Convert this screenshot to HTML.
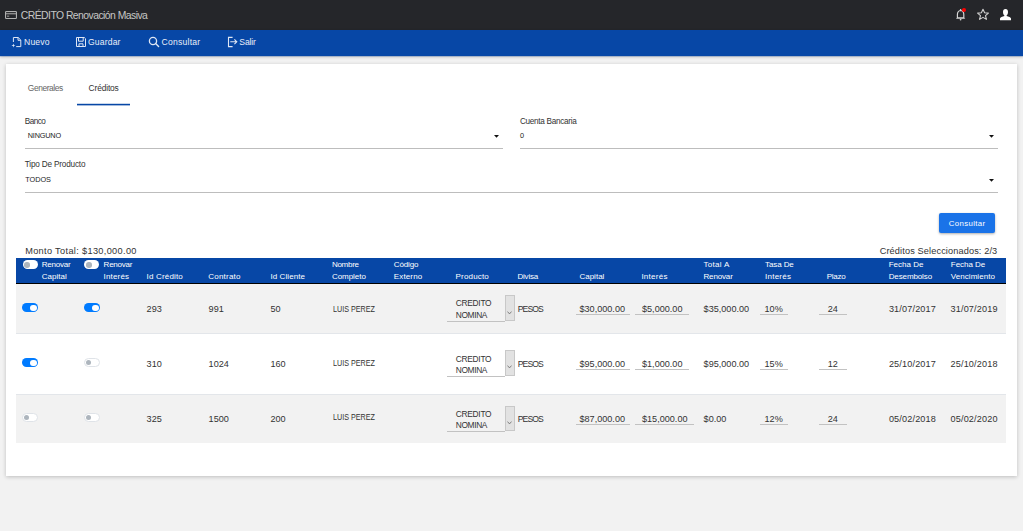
<!DOCTYPE html>
<html><head><meta charset="utf-8"><title>Crédito Renovación Masiva</title>
<style>
html,body{margin:0;padding:0;}
body{width:1023px;height:531px;overflow:hidden;background:#f2f2f2;position:relative;font-family:"Liberation Sans",sans-serif;}
.t{position:absolute;white-space:nowrap;line-height:12px;}
.r{position:absolute;}
</style></head><body>
<div class="r" style="left:0px;top:0px;width:1023px;height:30px;background:#25262a;"></div>
<svg class="r" style="left:5px;top:11px" width="12" height="8" viewBox="0 0 12 8"><rect x="0.55" y="0.55" width="10.9" height="6.9" rx="0.8" fill="none" stroke="#b0b0b0" stroke-width="1.1"/><rect x="1" y="1.9" width="10" height="1.5" fill="#8a8a8a"/><rect x="2" y="4.6" width="2.2" height="1.2" fill="#8a8a8a"/></svg>
<div class="t" style="left:20.80px;top:10.40px;font-size:10.4px;color:#c6c6c6;letter-spacing:-0.544px;">CRÉDITO Renovación Masiva</div>
<svg class="r" style="left:955px;top:8px" width="12" height="13" viewBox="0 0 12 13"><path d="M2.4 10 V6.6 C2.4 4.3 3.6 2.8 5.6 2.5 C7.6 2.8 8.8 4.3 8.8 6.6 V10" fill="none" stroke="#d8d8d8" stroke-width="1.15"/><path d="M2.6 9.3 L0.9 10.7 H10.3 L8.6 9.3 Z" fill="#d8d8d8"/><circle cx="5.6" cy="1.9" r="0.8" fill="#d8d8d8"/><circle cx="5.6" cy="11.6" r="0.85" fill="#cfcfcf"/></svg>
<div class="r" style="left:961.8px;top:7.8px;width:4.6px;height:4.6px;border-radius:50%;background:#f00"></div>
<svg class="r" style="left:976px;top:8px" width="14" height="13" viewBox="0 0 14 13"><path d="M7 1.2 L8.6 4.8 L12.4 5.1 L9.5 7.6 L10.4 11.4 L7 9.4 L3.6 11.4 L4.5 7.6 L1.6 5.1 L5.4 4.8 Z" fill="none" stroke="#cfcfcf" stroke-width="1.1" stroke-linejoin="round"/></svg>
<svg class="r" style="left:999px;top:8px" width="13" height="13" viewBox="0 0 13 13"><path d="M6.5 1 C8.2 1 9 2.3 9 4 C9 5.6 8.3 7 7.6 7.4 L7.6 8 C9.5 8.5 12 9.3 12 10.5 V12.2 H1 V10.5 C1 9.3 3.5 8.5 5.4 8 L5.4 7.4 C4.7 7 4 5.6 4 4 C4 2.3 4.8 1 6.5 1 Z" fill="#ffffff"/></svg>
<div class="r" style="left:0px;top:30px;width:1023px;height:26px;background:#0747a6;box-shadow:0 1px 3px rgba(0,0,0,0.22);z-index:2"></div>
<div class="r" style="left:0px;top:56px;width:1023px;height:1px;background:rgba(7,71,166,0.2);z-index:3"></div>
<svg class="r" style="left:11px;top:36px;z-index:3" width="12" height="12" viewBox="0 0 12 12"><path d="M2.4 6 V1.5 H7.2 L9.8 4.1 V10.6 H5.2" fill="none" stroke="#dfe7f5" stroke-width="1"/><path d="M7 1.5 V4.3 H9.8" fill="none" stroke="#dfe7f5" stroke-width="1"/><path d="M2.4 7.6 L2.9 9.1 L4.4 9.6 L2.9 10.1 L2.4 11.6 L1.9 10.1 L0.4 9.6 L1.9 9.1 Z" fill="#dfe7f5"/></svg>
<div class="t" style="left:24.00px;top:36.02px;font-size:8.6px;color:#e9eef8;letter-spacing:0.184px;z-index:3">Nuevo</div>
<svg class="r" style="left:76px;top:37px;z-index:3" width="10" height="10" viewBox="0 0 10 10"><path d="M0.5 0.5 H8.3 L9.5 1.7 V9.5 H0.5 Z" fill="none" stroke="#dfe7f5" stroke-width="1"/><path d="M2.5 0.5 V4.2 H7.2 V0.5" fill="none" stroke="#dfe7f5" stroke-width="1"/><path d="M3 9.5 V6.8 H7 V9.5" fill="none" stroke="#dfe7f5" stroke-width="1"/></svg>
<div class="t" style="left:88.00px;top:36.02px;font-size:8.6px;color:#e9eef8;letter-spacing:0.159px;z-index:3">Guardar</div>
<svg class="r" style="left:148px;top:36px;z-index:3" width="12" height="12" viewBox="0 0 12 12"><circle cx="5" cy="5" r="3.6" fill="none" stroke="#dfe7f5" stroke-width="1.3"/><path d="M7.6 7.6 L10.6 10.6" stroke="#dfe7f5" stroke-width="1.4" stroke-linecap="round"/></svg>
<div class="t" style="left:161.50px;top:36.02px;font-size:8.6px;color:#e9eef8;letter-spacing:0.237px;z-index:3">Consultar</div>
<svg class="r" style="left:227px;top:36px;z-index:3" width="12" height="12" viewBox="0 0 12 12"><path d="M5.6 1.4 H1.5 V10.6 H5.6" fill="none" stroke="#dfe7f5" stroke-width="1.1"/><path d="M3.3 5.8 H9.6 M7.4 3.4 L9.8 5.8 L7.4 8.2" fill="none" stroke="#dfe7f5" stroke-width="1.1"/></svg>
<div class="t" style="left:239.30px;top:36.02px;font-size:8.6px;color:#e9eef8;letter-spacing:-0.127px;z-index:3">Salir</div>
<div class="r" style="left:6px;top:64px;width:1011px;height:412px;background:#ffffff;box-shadow:0 1px 4px rgba(0,0,0,0.22)"></div>
<div class="t" style="left:27.80px;top:82.29px;font-size:8.4px;color:#666;letter-spacing:-0.407px;">Generales</div>
<div class="t" style="left:88.60px;top:82.29px;font-size:8.4px;color:#333;letter-spacing:-0.14px;">Créditos</div>
<div class="r" style="left:77px;top:104px;width:53px;height:1px;background:#0747a6;"></div>
<div class="r" style="left:77px;top:103px;width:53px;height:1px;background:rgba(7,71,166,0.22);"></div>
<div class="r" style="left:77px;top:105px;width:53px;height:1px;background:rgba(7,71,166,0.38);"></div>
<div class="t" style="left:24.80px;top:115.76px;font-size:8.2px;color:#333;letter-spacing:-0.537px;">Banco</div>
<div class="t" style="left:27.70px;top:130.37px;font-size:7.3px;color:#222;letter-spacing:-0.178px;">NINGUNO</div>
<div class="r" style="left:25px;top:148px;width:478px;height:1px;background:#bdbdbd;"></div>
<svg class="r" style="left:493.8px;top:134.5px" width="5" height="3" viewBox="0 0 5 3"><path d="M0 0 H5 L2.5 2.7 Z" fill="#111"/></svg>
<div class="t" style="left:520.00px;top:115.76px;font-size:8.2px;color:#333;letter-spacing:-0.306px;">Cuenta Bancaria</div>
<div class="t" style="left:520.00px;top:130.37px;font-size:7.3px;color:#222;letter-spacing:0px;">0</div>
<div class="r" style="left:520px;top:148px;width:478px;height:1px;background:#bdbdbd;"></div>
<svg class="r" style="left:988.7px;top:134.5px" width="5" height="3" viewBox="0 0 5 3"><path d="M0 0 H5 L2.5 2.7 Z" fill="#111"/></svg>
<div class="t" style="left:24.80px;top:159.26px;font-size:8.2px;color:#333;letter-spacing:-0.181px;">Tipo De Producto</div>
<div class="t" style="left:25.30px;top:174.07px;font-size:7.3px;color:#222;letter-spacing:-0.032px;">TODOS</div>
<div class="r" style="left:25px;top:192px;width:973px;height:1px;background:#bdbdbd;"></div>
<svg class="r" style="left:988.7px;top:178.5px" width="5" height="3" viewBox="0 0 5 3"><path d="M0 0 H5 L2.5 2.7 Z" fill="#111"/></svg>
<div class="r" style="left:939px;top:213px;width:56px;height:20px;background:#1a73e8;border-radius:2px;box-shadow:0 1px 2.5px rgba(0,0,0,0.32)"></div>
<div class="t" style="left:948.80px;top:218.30px;font-size:7.8px;color:#fff;letter-spacing:0.364px;">Consultar</div>
<div class="t" style="left:25.20px;top:244.51px;font-size:9.2px;color:#333;letter-spacing:0.336px;">Monto Total: $130,000.00</div>
<div class="t" style="left:879.70px;top:244.51px;font-size:9.2px;color:#333;letter-spacing:0.121px;">Créditos Seleccionados: 2/3</div>
<div class="r" style="left:16px;top:258px;width:990px;height:25px;background:#0747a6;"></div>
<div class="r" style="left:16px;top:283px;width:990px;height:1px;background:#000;"></div>
<div class="r" style="left:22.5px;top:260.4px;width:15px;height:8.5px;border-radius:5px;background:#fff"></div><div class="r" style="left:24.3px;top:262px;width:5.5px;height:5.5px;border-radius:50%;background:#adb5bd"></div>
<div class="r" style="left:84.2px;top:260.4px;width:15px;height:8.5px;border-radius:5px;background:#fff"></div><div class="r" style="left:86.0px;top:262px;width:5.5px;height:5.5px;border-radius:50%;background:#adb5bd"></div>
<div class="t" style="left:41.70px;top:259.33px;font-size:8px;color:#ffffff;letter-spacing:-0.19px;">Renovar</div>
<div class="t" style="left:41.70px;top:270.63px;font-size:8px;color:#ffffff;letter-spacing:0.016px;">Capital</div>
<div class="t" style="left:103.60px;top:259.33px;font-size:8px;color:#ffffff;letter-spacing:-0.24px;">Renovar</div>
<div class="t" style="left:103.60px;top:270.63px;font-size:8px;color:#ffffff;letter-spacing:0.157px;">Interés</div>
<div class="t" style="left:146.60px;top:270.63px;font-size:8px;color:#ffffff;letter-spacing:0.169px;">Id Crédito</div>
<div class="t" style="left:208.20px;top:270.63px;font-size:8px;color:#ffffff;letter-spacing:0.231px;">Contrato</div>
<div class="t" style="left:270.40px;top:270.63px;font-size:8px;color:#ffffff;letter-spacing:0.089px;">Id Cliente</div>
<div class="t" style="left:331.90px;top:259.33px;font-size:8px;color:#ffffff;letter-spacing:-0.271px;">Nombre</div>
<div class="t" style="left:331.90px;top:270.63px;font-size:8px;color:#ffffff;letter-spacing:-0.034px;">Completo</div>
<div class="t" style="left:393.80px;top:259.33px;font-size:8px;color:#ffffff;letter-spacing:-0.13px;">Código</div>
<div class="t" style="left:393.80px;top:270.63px;font-size:8px;color:#ffffff;letter-spacing:0.139px;">Externo</div>
<div class="t" style="left:455.60px;top:270.63px;font-size:8px;color:#ffffff;letter-spacing:0.169px;">Producto</div>
<div class="t" style="left:517.40px;top:270.63px;font-size:8px;color:#ffffff;letter-spacing:-0.178px;">Divisa</div>
<div class="t" style="left:579.40px;top:270.63px;font-size:8px;color:#ffffff;letter-spacing:0.016px;">Capital</div>
<div class="t" style="left:641.40px;top:270.63px;font-size:8px;color:#ffffff;letter-spacing:0.257px;">Interés</div>
<div class="t" style="left:703.50px;top:259.33px;font-size:8px;color:#ffffff;letter-spacing:0.297px;">Total A</div>
<div class="t" style="left:703.50px;top:270.63px;font-size:8px;color:#ffffff;letter-spacing:-0.157px;">Renovar</div>
<div class="t" style="left:765.10px;top:259.33px;font-size:8px;color:#ffffff;letter-spacing:-0.107px;">Tasa De</div>
<div class="t" style="left:765.10px;top:270.63px;font-size:8px;color:#ffffff;letter-spacing:0.224px;">Interés</div>
<div class="t" style="left:826.70px;top:270.63px;font-size:8px;color:#ffffff;letter-spacing:-0.252px;">Plazo</div>
<div class="t" style="left:888.70px;top:259.33px;font-size:8px;color:#ffffff;letter-spacing:0.003px;">Fecha De</div>
<div class="t" style="left:888.70px;top:270.63px;font-size:8px;color:#ffffff;letter-spacing:-0.118px;">Desembolso</div>
<div class="t" style="left:950.80px;top:259.33px;font-size:8px;color:#ffffff;letter-spacing:-0.04px;">Fecha De</div>
<div class="t" style="left:950.80px;top:270.63px;font-size:8px;color:#ffffff;letter-spacing:0.052px;">Vencimiento</div>
<div class="r" style="left:16px;top:284px;width:990px;height:50px;background:#f2f2f2;"></div>
<div class="r" style="left:16px;top:333px;width:990px;height:1px;background:#e3e6ea;"></div>
<div class="r" style="left:22px;top:303.20000000000005px;width:16px;height:9px;border-radius:5px;background:#007bff"></div><div class="r" style="left:30.3px;top:304.50000000000006px;width:6.4px;height:6.4px;border-radius:50%;background:#fff"></div>
<div class="r" style="left:84px;top:303.20000000000005px;width:16px;height:9px;border-radius:5px;background:#007bff"></div><div class="r" style="left:92.3px;top:304.50000000000006px;width:6.4px;height:6.4px;border-radius:50%;background:#fff"></div>
<div class="t" style="left:146.60px;top:302.95px;font-size:9.1px;color:#333;letter-spacing:0px;">293</div>
<div class="t" style="left:208.60px;top:302.95px;font-size:9.1px;color:#333;letter-spacing:0px;">991</div>
<div class="t" style="left:270.40px;top:302.95px;font-size:9.1px;color:#333;letter-spacing:0px;">50</div>
<div class="t" style="left:333.20px;top:303.22px;font-size:8.3px;color:#333;letter-spacing:0px;transform:scaleX(0.8652);transform-origin:0.00px 0;">LUIS PEREZ</div>
<div class="r" style="left:446.7px;top:321.0px;width:58.60000000000002px;height:1.0px;background:#c2c2c2;"></div>
<div class="r" style="left:505.3px;top:295.3px;width:9.300000000000011px;height:26.19999999999999px;background:#e2e2e2;box-sizing:border-box;border:1px solid #c8c8c8"></div>
<svg class="r" style="left:507.3px;top:310.50px" width="5" height="4" viewBox="0 0 5 4"><path d="M0.5 0.6 L2.5 2.9 L4.5 0.6" fill="none" stroke="#666" stroke-width="0.8"/></svg>
<div class="t" style="left:455.80px;top:297.39px;font-size:8.4px;color:#333;letter-spacing:-0.291px;">CREDITO</div>
<div class="t" style="left:455.80px;top:309.29px;font-size:8.4px;color:#333;letter-spacing:-0.38px;">NOMINA</div>
<div class="t" style="left:517.70px;top:303.42px;font-size:8.6px;color:#333;letter-spacing:-0.884px;">PESOS</div>
<div class="r" style="left:575.5px;top:314.4px;width:54.5px;height:1.0px;background:#c2c2c2;"></div>
<div class="t" style="left:579.50px;top:302.95px;font-size:9.1px;color:#333;letter-spacing:0px;">$30,000.00</div>
<div class="r" style="left:635px;top:314.4px;width:54px;height:1.0px;background:#c2c2c2;"></div>
<div class="t" style="left:642.00px;top:302.95px;font-size:9.1px;color:#333;letter-spacing:0px;">$5,000.00</div>
<div class="t" style="left:703.60px;top:302.95px;font-size:9.1px;color:#333;letter-spacing:0px;">$35,000.00</div>
<div class="r" style="left:759.5px;top:314.4px;width:28.299999999999955px;height:1.0px;background:#c2c2c2;"></div>
<div class="t" style="left:764.55px;top:302.95px;font-size:9.1px;color:#333;letter-spacing:0px;">10%</div>
<div class="r" style="left:818.6px;top:314.4px;width:28.199999999999932px;height:1.0px;background:#c2c2c2;"></div>
<div class="t" style="left:827.64px;top:302.95px;font-size:9.1px;color:#333;letter-spacing:0px;">24</div>
<div class="t" style="left:888.90px;top:302.95px;font-size:9.1px;color:#333;letter-spacing:0.162px;">31/07/2017</div>
<div class="t" style="left:950.50px;top:302.95px;font-size:9.1px;color:#333;letter-spacing:0.162px;">31/07/2019</div>
<div class="r" style="left:16px;top:334px;width:990px;height:60px;background:#ffffff;"></div>
<div class="r" style="left:22px;top:358.20000000000005px;width:16px;height:9px;border-radius:5px;background:#007bff"></div><div class="r" style="left:30.3px;top:359.50000000000006px;width:6.4px;height:6.4px;border-radius:50%;background:#fff"></div>
<div class="r" style="left:84px;top:358.20000000000005px;width:15.5px;height:8.5px;border-radius:5px;background:#fff;box-sizing:border-box;border:1px solid #dfe3e8"></div><div class="r" style="left:85.7px;top:359.70000000000005px;width:5.5px;height:5.5px;border-radius:50%;background:#adb5bd"></div>
<div class="t" style="left:146.60px;top:357.95px;font-size:9.1px;color:#333;letter-spacing:0px;">310</div>
<div class="t" style="left:208.60px;top:357.95px;font-size:9.1px;color:#333;letter-spacing:0px;">1024</div>
<div class="t" style="left:270.40px;top:357.95px;font-size:9.1px;color:#333;letter-spacing:0px;">160</div>
<div class="t" style="left:333.20px;top:357.22px;font-size:8.3px;color:#333;letter-spacing:0px;transform:scaleX(0.8652);transform-origin:0.00px 0;">LUIS PEREZ</div>
<div class="r" style="left:446.7px;top:375.6px;width:58.60000000000002px;height:1.0px;background:#c2c2c2;"></div>
<div class="r" style="left:505.3px;top:349.75px;width:9.300000000000011px;height:26.350000000000023px;background:#e2e2e2;box-sizing:border-box;border:1px solid #c8c8c8"></div>
<svg class="r" style="left:507.3px;top:364.95px" width="5" height="4" viewBox="0 0 5 4"><path d="M0.5 0.6 L2.5 2.9 L4.5 0.6" fill="none" stroke="#666" stroke-width="0.8"/></svg>
<div class="t" style="left:455.80px;top:353.29px;font-size:8.4px;color:#333;letter-spacing:-0.291px;">CREDITO</div>
<div class="t" style="left:455.80px;top:364.39px;font-size:8.4px;color:#333;letter-spacing:-0.38px;">NOMINA</div>
<div class="t" style="left:517.70px;top:358.42px;font-size:8.6px;color:#333;letter-spacing:-0.884px;">PESOS</div>
<div class="r" style="left:575.5px;top:369.3px;width:54.5px;height:1.0px;background:#c2c2c2;"></div>
<div class="t" style="left:579.50px;top:357.95px;font-size:9.1px;color:#333;letter-spacing:0px;">$95,000.00</div>
<div class="r" style="left:635px;top:369.3px;width:54px;height:1.0px;background:#c2c2c2;"></div>
<div class="t" style="left:642.00px;top:357.95px;font-size:9.1px;color:#333;letter-spacing:0px;">$1,000.00</div>
<div class="t" style="left:703.60px;top:357.95px;font-size:9.1px;color:#333;letter-spacing:0px;">$95,000.00</div>
<div class="r" style="left:759.5px;top:369.3px;width:28.299999999999955px;height:1.0px;background:#c2c2c2;"></div>
<div class="t" style="left:764.55px;top:357.95px;font-size:9.1px;color:#333;letter-spacing:0px;">15%</div>
<div class="r" style="left:818.6px;top:369.3px;width:28.199999999999932px;height:1.0px;background:#c2c2c2;"></div>
<div class="t" style="left:827.64px;top:357.95px;font-size:9.1px;color:#333;letter-spacing:0px;">12</div>
<div class="t" style="left:888.90px;top:357.95px;font-size:9.1px;color:#333;letter-spacing:0.162px;">25/10/2017</div>
<div class="t" style="left:950.50px;top:357.95px;font-size:9.1px;color:#333;letter-spacing:0.162px;">25/10/2018</div>
<div class="r" style="left:16px;top:394px;width:990px;height:49px;background:#f2f2f2;"></div>
<div class="r" style="left:16px;top:394px;width:990px;height:1px;background:#e3e6ea;"></div>
<div class="r" style="left:22px;top:413.20000000000005px;width:15.5px;height:8.5px;border-radius:5px;background:#fff;box-sizing:border-box;border:1px solid #dfe3e8"></div><div class="r" style="left:23.7px;top:414.70000000000005px;width:5.5px;height:5.5px;border-radius:50%;background:#adb5bd"></div>
<div class="r" style="left:84px;top:413.20000000000005px;width:15.5px;height:8.5px;border-radius:5px;background:#fff;box-sizing:border-box;border:1px solid #dfe3e8"></div><div class="r" style="left:85.7px;top:414.70000000000005px;width:5.5px;height:5.5px;border-radius:50%;background:#adb5bd"></div>
<div class="t" style="left:146.60px;top:412.95px;font-size:9.1px;color:#333;letter-spacing:0px;">325</div>
<div class="t" style="left:208.60px;top:412.95px;font-size:9.1px;color:#333;letter-spacing:0px;">1500</div>
<div class="t" style="left:270.40px;top:412.95px;font-size:9.1px;color:#333;letter-spacing:0px;">200</div>
<div class="t" style="left:333.20px;top:411.22px;font-size:8.3px;color:#333;letter-spacing:0px;transform:scaleX(0.8652);transform-origin:0.00px 0;">LUIS PEREZ</div>
<div class="r" style="left:446.7px;top:430.8px;width:58.60000000000002px;height:1.0px;background:#c2c2c2;"></div>
<div class="r" style="left:505.3px;top:405.5px;width:9.300000000000011px;height:25.80000000000001px;background:#e2e2e2;box-sizing:border-box;border:1px solid #c8c8c8"></div>
<svg class="r" style="left:507.3px;top:420.70px" width="5" height="4" viewBox="0 0 5 4"><path d="M0.5 0.6 L2.5 2.9 L4.5 0.6" fill="none" stroke="#666" stroke-width="0.8"/></svg>
<div class="t" style="left:455.80px;top:407.69px;font-size:8.4px;color:#333;letter-spacing:-0.291px;">CREDITO</div>
<div class="t" style="left:455.80px;top:419.49px;font-size:8.4px;color:#333;letter-spacing:-0.38px;">NOMINA</div>
<div class="t" style="left:517.70px;top:413.42px;font-size:8.6px;color:#333;letter-spacing:-0.884px;">PESOS</div>
<div class="r" style="left:575.5px;top:424.3px;width:54.5px;height:1.0px;background:#c2c2c2;"></div>
<div class="t" style="left:579.50px;top:412.95px;font-size:9.1px;color:#333;letter-spacing:0px;">$87,000.00</div>
<div class="r" style="left:635px;top:424.3px;width:59px;height:1.0px;background:#c2c2c2;"></div>
<div class="t" style="left:642.00px;top:412.95px;font-size:9.1px;color:#333;letter-spacing:0px;">$15,000.00</div>
<div class="t" style="left:703.60px;top:412.95px;font-size:9.1px;color:#333;letter-spacing:0px;">$0.00</div>
<div class="r" style="left:759.5px;top:424.3px;width:28.299999999999955px;height:1.0px;background:#c2c2c2;"></div>
<div class="t" style="left:764.55px;top:412.95px;font-size:9.1px;color:#333;letter-spacing:0px;">12%</div>
<div class="r" style="left:818.6px;top:424.3px;width:28.199999999999932px;height:1.0px;background:#c2c2c2;"></div>
<div class="t" style="left:827.64px;top:412.95px;font-size:9.1px;color:#333;letter-spacing:0px;">24</div>
<div class="t" style="left:888.90px;top:412.95px;font-size:9.1px;color:#333;letter-spacing:0.162px;">05/02/2018</div>
<div class="t" style="left:950.50px;top:412.95px;font-size:9.1px;color:#333;letter-spacing:0.162px;">05/02/2020</div>
</body></html>
